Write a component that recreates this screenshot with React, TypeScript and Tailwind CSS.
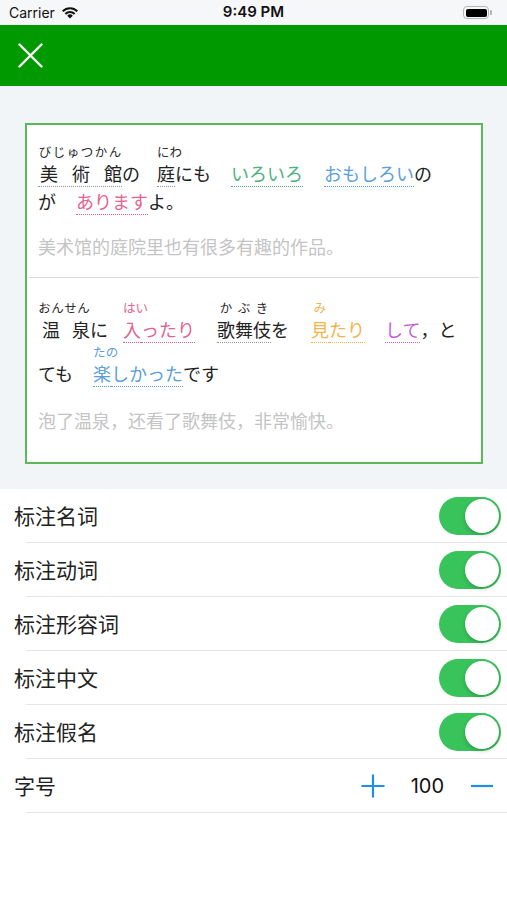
import type { ReactNode } from "react";

const jp = "font-['Noto_Sans_CJK_JP',sans-serif]";
const sc = "font-['Noto_Sans_CJK_SC',sans-serif]";

type TxtProps = { t: string; color?: string; line?: string; ml?: string };

function Txt({ t, color = "text-[#222]", line = "border-transparent", ml = "" }: TxtProps) {
  return (
    <span
      className={`whitespace-nowrap border-b border-dotted text-[18px] leading-[26px] ${color} ${line} ${ml}`}
    >
      {t}
    </span>
  );
}

type RubyProps = {
  base: string;
  rt: string;
  w?: string;
  pad?: string;
  color?: string;
  rtColor?: string;
  line?: string;
  ml?: string;
};

function Ruby({
  base,
  rt,
  w = "",
  pad = "",
  color = "text-[#222]",
  rtColor = "text-[#2a2a2a]",
  line = "border-transparent",
  ml = "",
}: RubyProps) {
  return (
    <span className={`flex flex-col ${w} ${ml}`}>
      <span className={`flex justify-around whitespace-nowrap text-[12.5px] leading-[16px] ${rtColor}`}>
        {[...rt].map((c, i) => (
          <span key={i}>{c}</span>
        ))}
      </span>
      <span
        className={`flex justify-between border-b border-dotted text-[18px] leading-[26px] ${pad} ${color} ${line}`}
      >
        {[...base].map((c, i) => (
          <span key={i}>{c}</span>
        ))}
      </span>
    </span>
  );
}

function Line({ children }: { children: ReactNode }) {
  return <div className="flex items-end">{children}</div>;
}

const gray = "border-[#9a9a9a]";
const pink = "text-[#e6628e]";
const pinkLine = "border-[#e6628e]";
const blue = "text-[#5a9fdc]";
const blueLine = "border-[#5a9fdc]";
const green = "text-[#4cb37e]";
const greenLine = "border-[#4cb37e]";
const orange = "text-[#f4b44c]";
const orangeLine = "border-[#f4b44c]";
const purple = "text-[#c25fd6]";
const purpleLine = "border-[#c25fd6]";

function Toggle() {
  return (
    <span className="flex h-[38px] w-[62px] items-center justify-end rounded-full bg-[#38c35b] pr-[2px]">
      <span className="h-[34px] w-[34px] rounded-full bg-white shadow-[0_2px_4px_rgba(0,0,0,0.2)]" />
    </span>
  );
}

const labels = ["标注名词", "标注动词", "标注形容词", "标注中文", "标注假名"];

export default function App() {
  return (
    <div className="flex min-h-[900px] w-[507px] flex-col bg-white">
      {/* status bar */}
      <div className="relative flex h-[25px] items-center bg-[#f6f7f8] px-[9px] font-['Inter',sans-serif] text-[#111]">
        <span className="text-[14px]">Carrier</span>
        <svg className="ml-[6px]" width="18" height="13" viewBox="0 0 18 13" fill="#111">
          <path d="M9 12.6 L6.2 9.7 A4 4 0 0 1 11.8 9.7 Z" />
          <path d="M3.6 7.2 A7.6 7.6 0 0 1 14.4 7.2 L12.9 8.7 A5.4 5.4 0 0 0 5.1 8.7 Z" />
          <path d="M1 4.6 A11.2 11.2 0 0 1 17 4.6 L15.5 6.1 A9 9 0 0 0 2.5 6.1 Z" />
        </svg>
        <span className="absolute left-1/2 -translate-x-1/2 text-[15px] font-semibold">9:49 PM</span>
        <span className="ml-auto flex items-center pr-[6px]">
          <span className="flex h-[13px] w-[26px] items-center rounded-[4px] border border-[#b5b5b5] p-[1.5px]">
            <span className="h-full w-full rounded-[2px] bg-black" />
          </span>
          <span className="ml-[1px] h-[5px] w-[2px] rounded-r-[1px] bg-[#b5b5b5]" />
        </span>
      </div>

      {/* nav bar */}
      <div className="flex h-[61px] items-center bg-[#009900] pl-[18px]">
        <svg width="25" height="25" viewBox="0 0 25 25" stroke="white" strokeWidth="2.4" strokeLinecap="round">
          <path d="M1.5 1.5 L23.5 23.5 M23.5 1.5 L1.5 23.5" />
        </svg>
      </div>

      {/* card area */}
      <div className={`bg-[#f2f5f7] pb-[25px] pt-[37px] ${jp}`}>
        <div className="ml-[25px] mr-[24px] border-2 border-[#5cb85c] bg-white">
          <div className="pb-[19px] pl-[11px] pt-[19px]">
            <div className="flex flex-col gap-[1px]">
              <Line>
                <Ruby base="美術館" rt="びじゅつかん" w="w-[84px]" pad="pl-[2px]" line={gray} />
                <Txt t="の" />
                <Ruby base="庭" rt="にわ" w="w-[18px]" line={gray} ml="ml-[17px]" />
                <Txt t="にも" />
                <Txt t="いろいろ" color={green} line={greenLine} ml="ml-[20px]" />
                <Txt t="おもしろい" color={blue} line={blueLine} ml="ml-[21px]" />
                <Txt t="の" />
              </Line>
              <Line>
                <Txt t="が" />
                <Txt t="あります" color={pink} line={pinkLine} ml="ml-[20px]" />
                <Txt t="よ。" />
              </Line>
            </div>
            <p className={`mt-[19px] text-[18px] leading-[24px] text-[#c4c4c4] ${sc}`}>
              美术馆的庭院里也有很多有趣的作品。
            </p>
          </div>
          <div className="mx-[2px] h-px bg-[#d9d9d9]" />
          <div className="pb-[30px] pl-[11px] pt-[22px]">
            <div className="flex flex-col gap-[1px]">
              <Line>
                <Ruby base="温泉" rt="おんせん" w="w-[52px]" pad="pl-[4px]" />
                <Txt t="に" />
                <Ruby base="入" rt="はい" w="w-[18px]" color={pink} rtColor={pink} line={pinkLine} ml="ml-[15px]" />
                <Txt t="ったり" color={pink} line={pinkLine} />
                <Ruby base="歌舞伎" rt="かぶき" line={gray} ml="ml-[22px]" />
                <Txt t="を" />
                <Ruby base="見" rt="み" w="w-[18px]" color={orange} rtColor={orange} line={orangeLine} ml="ml-[22px]" />
                <Txt t="たり" color={orange} line={orangeLine} />
                <Txt t="して" color={purple} line={purpleLine} ml="ml-[20px]" />
                <Txt t="，と" />
              </Line>
              <Line>
                <Txt t="ても" />
                <Ruby base="楽" rt="たの" w="w-[18px]" color={blue} rtColor={blue} line={blueLine} ml="ml-[20px]" />
                <Txt t="しかった" color={blue} line={blueLine} />
                <Txt t="です" />
              </Line>
            </div>
            <p className={`mt-[21px] text-[18px] leading-[24px] text-[#c4c4c4] ${sc}`}>
              泡了温泉，还看了歌舞伎，非常愉快。
            </p>
          </div>
        </div>
      </div>

      {/* settings list */}
      <div className={`bg-white text-[#222] ${sc}`}>
        {labels.map((label) => (
          <div key={label}>
            <div className="flex h-[53px] items-center justify-between pl-[14px] pr-[6px]">
              <span className="text-[21px]">{label}</span>
              <Toggle />
            </div>
            <div className="ml-[26px] h-px bg-[#e6e6e6]" />
          </div>
        ))}
        <div className="flex h-[53px] items-center pl-[14px] pr-[14px]">
          <span className="text-[21px]">字号</span>
          <span className="ml-auto flex items-center">
            <svg width="24" height="24" viewBox="0 0 24 24" stroke="#1d8fe4" strokeWidth="2.2">
              <path d="M12 0.5 V23.5 M0.5 12 H23.5" />
            </svg>
            <span className="ml-[26px] font-['Inter',sans-serif] text-[20px] text-[#111]">100</span>
            <svg className="ml-[27px]" width="22" height="24" viewBox="0 0 22 24" stroke="#1d8fe4" strokeWidth="2.2">
              <path d="M0 12 H22" />
            </svg>
          </span>
        </div>
        <div className="ml-[26px] h-px bg-[#e6e6e6]" />
      </div>
    </div>
  );
}
